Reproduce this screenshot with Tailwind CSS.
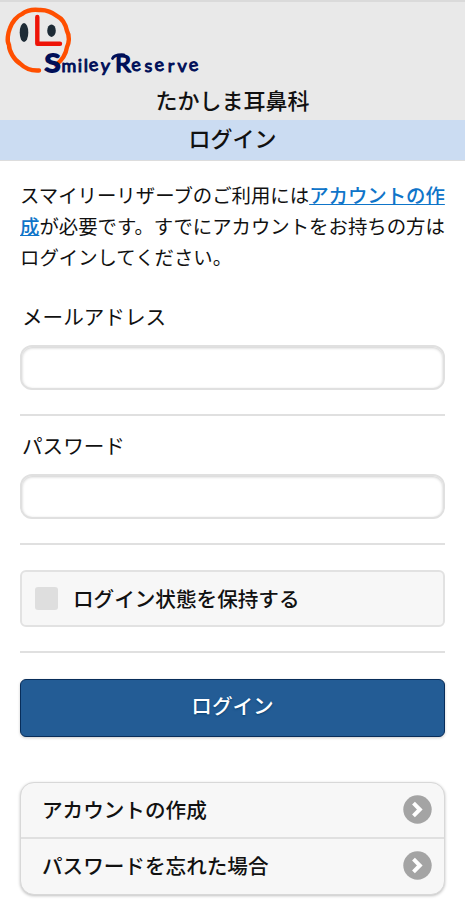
<!DOCTYPE html>
<html lang="ja">

<head>
    <meta charset="UTF-8">
    <meta name="viewport" content="width=device-width, initial-scale=1.0">
    <title>ログイン</title>
    <script src="https://cdn.jsdelivr.net/npm/@tailwindcss/browser@4"></script>
</head>

<body class="h-[910px] overflow-hidden bg-white font-['Noto_Sans_CJK_JP',sans-serif] text-[20.6px] text-[#111]">
    <header class="h-[120px] bg-[#e9e9e9] border-t-2 border-[#dadada] flex flex-col">
        <svg class="block h-[78px] w-[220px] shrink-0" viewBox="0 2 220 78" fill="none">
            <path d="M39 70.500C31 71 24 67.500 20 63.500C14 60 9 51 9 45C6.500 41 8 33 10 28C12 22 17 16 22 14C27 10 34 9.500 39 10C46 9.500 52 12 57 16C63 19 66 26 67 31C70 36 69 43 67 47C66 54 61 61 56 65" stroke="#ff4f00" stroke-width="4.400" stroke-linecap="round" stroke-linejoin="round" />
            <ellipse cx="24" cy="32.500" rx="4.300" ry="9.500" fill="#1d2b36" />
            <ellipse cx="51.500" cy="30.700" rx="4.300" ry="6.200" fill="#1d2b36" />
            <path d="M37.300 17V43.700H60" stroke="#ee1408" stroke-width="4.400" stroke-linecap="round" stroke-linejoin="round" />
            <g fill="#000f58" stroke="#000f58" stroke-linejoin="round" font-family="Lato, sans-serif" font-weight="400">
                <text x="44.500" y="71.500" font-size="25" stroke-width="2" textLength="16" lengthAdjust="spacingAndGlyphs">S</text>
                <text x="61.500" y="71.500" font-size="18" stroke-width="1" textLength="48" lengthAdjust="spacing" rotate="0 0 0 -8 4">miley</text>
                <text x="115" y="72" font-size="23" stroke-width="1.400" textLength="16" lengthAdjust="spacingAndGlyphs">R</text>
                <text x="132" y="71.500" font-size="18" stroke-width="1" textLength="67" lengthAdjust="spacing" rotate="-8 0 -8 0 0 -8">eserve</text>
            </g>
            <path d="M112.500 58.500C114 54.800 119 54.500 124 54.800" stroke="#000f58" stroke-width="2.800" stroke-linecap="round" />
        </svg>
        <p class="h-[38px] leading-[38px] text-center text-[22px] font-medium">たかしま耳鼻科</p>
    </header>
    <h1 class="h-[41px] leading-[35px] bg-[#cbdcf2] border-b border-[#ddd] text-center text-[22px] font-medium">ログイン</h1>

    <main class="px-5 pt-[18px]">
        <p class="-mr-2 text-[19.4px] leading-[31px]">スマイリーリザーブのご利用には<a href="#" class="font-medium text-[#0f75c9] underline">アカウントの作<br>成</a>が必要です。すでにアカウントをお持ちの方は<br>ログインしてください。</p>

        <form>
            <div class="h-[144px] border-b-2 border-[#e0e0e0] pt-[28px]">
                <label for="email" class="block h-[45px] leading-[33px] pl-[2px]">メールアドレス</label>
                <input type="text" id="email" class="block w-full h-[45px] rounded-[12px] border-2 border-[#e0e0e0] bg-white px-2 shadow-[inset_0_1px_3px_rgba(0,0,0,0.2)]">
            </div>
            <div class="h-[129px] border-b-2 border-[#e0e0e0] pt-[13px]">
                <label for="pass" class="block h-[45px] leading-[33px] pl-[2px]">パスワード</label>
                <input type="password" id="pass" class="block w-full h-[45px] rounded-[12px] border-2 border-[#e0e0e0] bg-white px-2 shadow-[inset_0_1px_3px_rgba(0,0,0,0.2)]">
            </div>
            <div class="h-[108px] border-b-2 border-[#e0e0e0] pt-[25px]">
                <label class="flex items-center h-[57px] rounded-md border-2 border-[#e2e2e2] bg-[#f7f7f7] pl-[13px] gap-[15px] font-medium">
                    <span class="size-[23px] rounded-[3px] bg-[#dedede]"></span>
                    ログイン状態を保持する
                </label>
            </div>
            <button type="submit" class="block w-full h-[58px] mt-[26px] pb-1.5 rounded-md border border-[#082d5a] bg-[#235c95] text-center font-medium text-white shadow-[0_1px_3px_rgba(0,0,0,0.2)] [text-shadow:0_1px_2px_#054070]">ログイン</button>
        </form>

        <ul class="mt-[45px] h-[113px] rounded-[14px] border border-[#d8d8d8] bg-[#f7f7f7] font-medium shadow-[0_1px_3px_rgba(0,0,0,0.25)]">
            <li class="h-[56px] border-b-2 border-[#e0e0e0]">
                <a href="#" class="flex h-full items-center justify-between pb-[2px] pl-[21px] pr-3">
                    アカウントの作成
                    <svg class="size-[29px]" viewBox="0 0 29 29" fill="none">
                        <circle cx="14.500" cy="14.500" r="14.200" fill="#a4a4a4" />
                        <path d="M10.500 8.200L16.800 14.500L10.500 20.800" stroke="#fff" stroke-width="4" />
                    </svg>
                </a>
            </li>
            <li class="h-[54px]">
                <a href="#" class="flex h-full items-center justify-between pb-[2px] pl-[21px] pr-3">
                    パスワードを忘れた場合
                    <svg class="size-[29px]" viewBox="0 0 29 29" fill="none">
                        <circle cx="14.500" cy="14.500" r="14.200" fill="#a4a4a4" />
                        <path d="M10.500 8.200L16.800 14.500L10.500 20.800" stroke="#fff" stroke-width="4" />
                    </svg>
                </a>
            </li>
        </ul>
    </main>
</body>

</html>
